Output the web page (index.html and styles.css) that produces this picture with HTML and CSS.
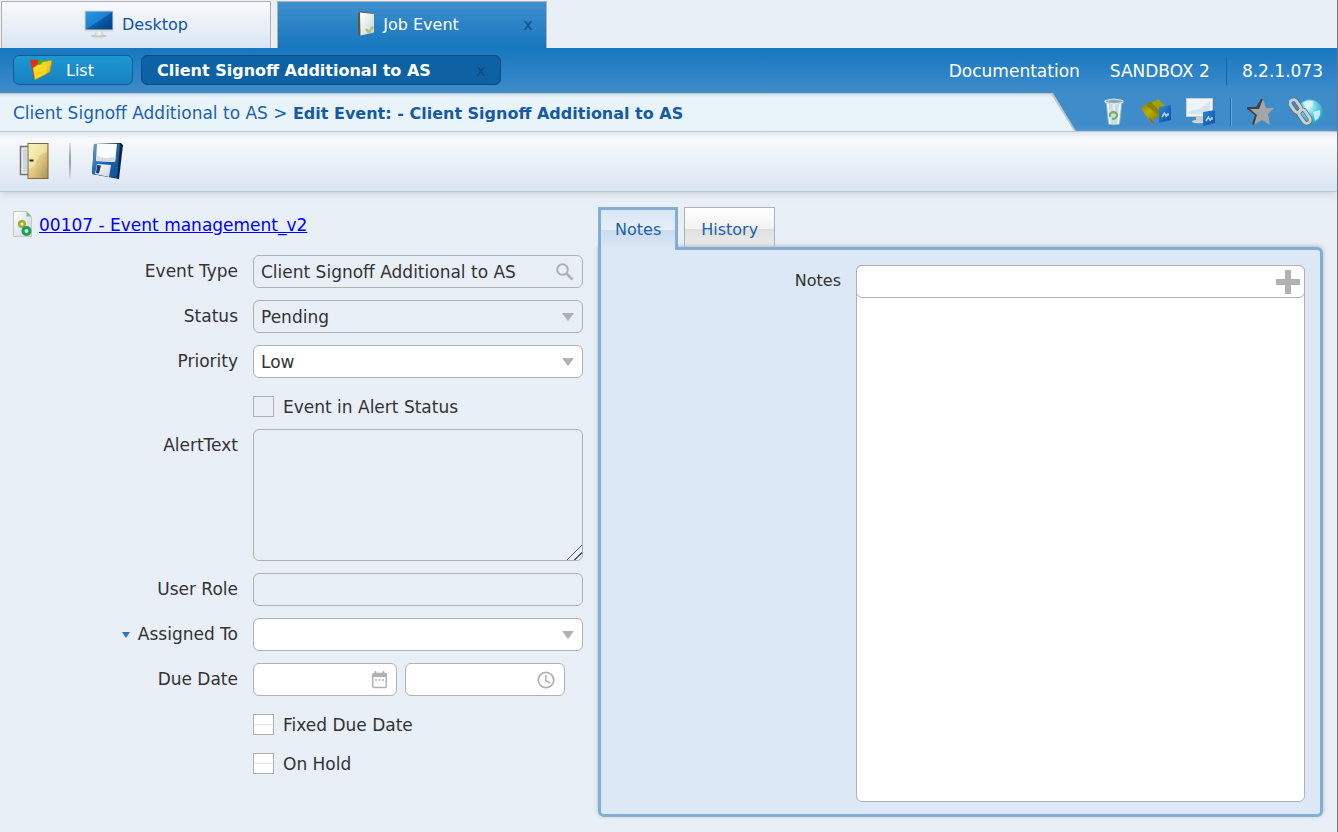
FILE: index.html
```
<!DOCTYPE html>
<html lang="en">
<head>
<meta charset="utf-8">
<title>Edit Event</title>
<link rel="stylesheet" href="styles.css">
</head>
<body>
<svg class="defs" aria-hidden="true">
  <defs>
    <linearGradient id="screen" x1="0" y1="0" x2="1" y2="1"><stop offset="0" stop-color="#2f9be6"/><stop offset=".5" stop-color="#1a7fd0"/><stop offset=".52" stop-color="#0a5cab"/><stop offset="1" stop-color="#043a80"/></linearGradient>
    <linearGradient id="metal" x1="0" y1="0" x2="1" y2="0"><stop offset="0" stop-color="#c4c6c9"/><stop offset=".5" stop-color="#f6f6f6"/><stop offset="1" stop-color="#b9bbbe"/></linearGradient>
    <linearGradient id="gold" x1="0" y1="0" x2="1" y2="1"><stop offset="0" stop-color="#f9f0b4"/><stop offset=".5" stop-color="#e3cc88"/><stop offset="1" stop-color="#b08f50"/></linearGradient>
    <linearGradient id="paper" x1="0" y1="0" x2="1" y2="1"><stop offset="0" stop-color="#ffffff"/><stop offset="1" stop-color="#cfd4d6"/></linearGradient>
    <linearGradient id="disk" x1="0" y1="0" x2="1" y2="1"><stop offset="0" stop-color="#6f9fcb"/><stop offset=".5" stop-color="#1b65ad"/><stop offset="1" stop-color="#0a4f9a"/></linearGradient>
    <linearGradient id="badge" x1="0" y1="0" x2="1" y2="1"><stop offset="0" stop-color="#2f86d8"/><stop offset="1" stop-color="#0a4fa6"/></linearGradient>
    <linearGradient id="folder" x1="0" y1="0" x2="1" y2="1"><stop offset="0" stop-color="#ffe95a"/><stop offset="1" stop-color="#dfa800"/></linearGradient>
    <linearGradient id="olive" x1="0" y1="0" x2="1" y2="1"><stop offset="0" stop-color="#7a7400"/><stop offset=".45" stop-color="#b9ad04"/><stop offset="1" stop-color="#6e6700"/></linearGradient>
    <radialGradient id="globe" cx=".45" cy=".3" r=".75"><stop offset="0" stop-color="#d9fbff"/><stop offset=".45" stop-color="#5fd0e4"/><stop offset="1" stop-color="#1799b8"/></radialGradient>
  </defs>
</svg>

<nav class="tabs">
  <button class="tab">
    <svg width="30" height="28" viewBox="0 0 30 28" aria-hidden="true">
      <ellipse cx="15" cy="26" rx="8" ry="1.500" fill="#a5abb2" opacity=".6"/>
      <path d="M11 20h8v4l2 1.500h-12l2-1.500z" fill="url(#metal)"/>
      <rect x=".5" y=".5" width="29" height="21" fill="#d7d9db"/>
      <rect x="1.500" y="1.500" width="27" height="18" fill="url(#screen)"/>
    </svg>
    Desktop
  </button>
  <div class="tab tab-active">
    <button class="tab-label">
      <svg width="18" height="26" viewBox="0 0 18 26" aria-hidden="true">
        <path d="M1 2l3-1.500 13 2v19l-13 1.500-3 2z" fill="#5d5a43"/>
        <path d="M3 1.500l14 1.500v18.500l-13.500 3z" fill="url(#paper)"/>
        <path d="M9 18l3 3.500 4-6" fill="none" stroke="#a9c67e" stroke-width="2.500"/>
      </svg>
      Job Event
    </button>
    <button class="tab-close" aria-label="Close Job Event">x</button>
  </div>
</nav>

<header class="header">
  <button class="subtab">
    <svg width="24" height="22" viewBox="0 0 24 22" aria-hidden="true">
      <path d="M1 1l8-.5 1 6-5 13z" fill="#e0301c"/>
      <path d="M9 3l2-2.500 6 1v7h-8z" fill="#28bd20"/>
      <path d="M4 9l4-3 4-1 1-2 10-2-2 12-15 8z" fill="url(#folder)" stroke="#a88900" stroke-width=".7"/>
      <path d="M4 9l15-4-2 10-11 5z" fill="#fbdc1c" opacity=".7"/>
    </svg>
    <span>List</span>
  </button>
  <div class="subtab subtab-active">
    <button class="subtab-label">Client Signoff Additional to AS</button>
    <button class="subtab-close" aria-label="Close event">x</button>
  </div>
  <div class="meta">
    <a href="#" class="meta-link">Documentation</a>
    <span class="meta-env">SANDBOX 2</span>
    <span class="meta-version">8.2.1.073</span>
  </div>
</header>

<div class="crumb-bar">
  <div class="crumb-edge">
    <div class="crumbs">Client Signoff Additional to AS &gt; <strong>Edit Event: - Client Signoff Additional to AS</strong></div>
  </div>
  <div class="quick">
    <button aria-label="Recycle bin">
      <svg width="20" height="28" viewBox="0 0 20 28" aria-hidden="true">
        <path d="M2 4h16l-2.500 22q-5.500 2-11 0z" fill="#c9dde2" stroke="#9db2b8" stroke-width=".8"/>
        <path d="M4 6l2 20M16 6l-2 20M10 6v6" stroke="#fff" stroke-width="1.500" opacity=".8"/>
        <path d="M1 2.500q9-3 18 0v2q-9 2.500-18 0z" fill="#8fa9b4" stroke="#e4ebec" stroke-width="1"/>
        <path d="M6 19q-1-4 3-5 4 0 4 4-1 3-5 3" fill="none" stroke="#79ae62" stroke-width="2"/>
      </svg>
    </button>
    <button aria-label="Map">
      <svg width="32" height="28" viewBox="0 0 32 28" aria-hidden="true">
        <path d="M1 9q4 1 6-3 2-2 4-2 4 1 8-3l7 7-5 12q-3-2-6 1l-3 4z" fill="url(#olive)"/>
        <path d="M7 7q3-4 5-3l9 9-1 5z" fill="#8a8300"/>
        <path d="M13 4q4 0 6-3l7 7-5 5z" fill="#a89e02"/>
        <path d="M10 20l5 6" stroke="#8b6a4c" stroke-width="1.500"/>
        <path d="M20 9l12-2v15l-12 3z" fill="url(#badge)"/>
        <path d="M23 19l2.500-4 2 4M27 17h2v-2" fill="none" stroke="#b5d6f5" stroke-width="1.500"/>
      </svg>
    </button>
    <button aria-label="Screen">
      <svg width="29" height="28" viewBox="0 0 29 28" aria-hidden="true">
        <ellipse cx="13" cy="23.500" rx="7" ry="1.800" fill="#d2d5d7"/>
        <path d="M10 18h7v5h-7z" fill="#c7cdd0"/>
        <rect x=".5" y=".5" width="26" height="18" fill="#f1f2f3" stroke="#c8ced2"/>
        <path d="M3 3h21v13h-21z" fill="#d5e4f0"/>
        <path d="M3 3h21q-8 9-21 10z" fill="#eef5fa"/>
        <path d="M17 14l12-2v13l-12 3z" fill="url(#badge)"/>
        <path d="M20 23l2.500-4 2 4M24 21h2v-2" fill="none" stroke="#b5d6f5" stroke-width="1.500"/>
      </svg>
    </button>
    <span class="quick-sep"></span>
    <button aria-label="Favourites">
      <svg width="27" height="28" viewBox="0 0 27 28" aria-hidden="true">
        <path d="M14 1h2l2 9-2 6-9 11-2-1 3-9-8-6v-2h9z" fill="#3d4044"/>
        <path d="M16 1l3 9h8l-6 6 2 11-8-5-8 5 3-10-7-6h9z" fill="#a3a5a7"/>
      </svg>
    </button>
    <button aria-label="Web links">
      <svg width="34" height="28" viewBox="0 0 34 28" aria-hidden="true">
        <circle cx="21" cy="14" r="12.500" fill="url(#globe)"/>
        <path d="M14 5q5-4 11-1l-2 4-6 2zM24 14l7-2q1 8-5 11z" fill="#e8fcff" opacity=".75"/>
        <g fill="none" stroke="#596d78" stroke-width="4.500"><rect x="3" y="1" width="7" height="14" rx="3.500" transform="rotate(-35 6.500 8)"/><rect x="12" y="11" width="7" height="15" rx="3.500" transform="rotate(-35 15.500 18.500)"/></g>
        <g fill="none" stroke="#ccd0d2" stroke-width="3"><rect x="3" y="1" width="7" height="14" rx="3.500" transform="rotate(-35 6.500 8)"/><rect x="12" y="11" width="7" height="15" rx="3.500" transform="rotate(-35 15.500 18.500)"/></g>
      </svg>
    </button>
  </div>
</div>

<div class="toolbar">
  <button aria-label="Exit">
    <svg width="30" height="36" viewBox="0 0 30 36" aria-hidden="true">
      <path d="M9 3.500h-7.500v28h7.500" fill="#e9eef0" stroke="#77716b" stroke-width="1.500"/>
      <path d="M4 6h4v23h-4z" fill="#c9d8e0"/>
      <rect x="9" y=".5" width="20" height="35" fill="url(#gold)" stroke="#80683f"/>
      <path d="M10 1h18v8q-9 2-11 10-2 5-7 7z" fill="#fff8c4" opacity=".45"/>
      <path d="M10.500 17.500h4" stroke="#2b2416" stroke-width="2"/>
    </svg>
  </button>
  <span class="toolbar-sep"></span>
  <button aria-label="Save">
    <svg width="32" height="36" viewBox="0 0 32 36" aria-hidden="true">
      <path d="M3 1l27-1 2 2-4 34-27-5z" fill="#14243a"/>
      <path d="M3 1h26l-3 34-25-4z" fill="url(#disk)"/>
      <path d="M6 1h20l-2 18-19-1z" fill="#fbfcfd"/>
      <path d="M6 13q10 4 19 0l-1 6-19-1z" fill="#d8dde2"/>
      <path d="M6 21l14 1-2 12-14-3z" fill="url(#paper)"/>
      <path d="M6 22l4 .5-2 8-3-.5z" fill="#123f75"/>
    </svg>
  </button>
</div>

<main class="main">
  <form class="form">
    <div class="record">
      <svg width="20" height="28" viewBox="0 0 20 28" aria-hidden="true">
        <path d="M.5 1.500h13l5 5v20h-18z" fill="url(#paper)" stroke="#c5c9cb"/>
        <path d="M13.500 1.500l5 5h-5z" fill="#73bc8d"/>
        <circle cx="9" cy="14" r="2.800" fill="none" stroke="#a2ad28" stroke-width="2.500"/>
        <circle cx="13.500" cy="21" r="3.500" fill="#c9eed9" stroke="#1d9b58" stroke-width="3"/>
      </svg>
      <a href="#">00107 - Event management_v2</a>
    </div>

    <div class="row">
      <label class="label" for="type">Event Type</label>
      <div class="control control-off">
        <input id="type" value="Client Signoff Additional to AS" readonly>
        <button type="button" class="icon-button" aria-label="Search">
          <svg width="18" height="18" viewBox="0 0 18 18" aria-hidden="true"><circle cx="6.500" cy="6.500" r="5.300" fill="none" stroke="#b1b1b1" stroke-width="2"/><path d="M10.500 10.500l6 6" stroke="#b1b1b1" stroke-width="2.500"/></svg>
        </button>
      </div>
    </div>
    <div class="row">
      <label class="label" for="status">Status</label>
      <div class="control control-off drop"><select id="status" disabled><option>Pending</option></select></div>
    </div>
    <div class="row">
      <label class="label" for="priority">Priority</label>
      <div class="control drop"><select id="priority"><option>Low</option></select></div>
    </div>
    <div class="row row-check">
      <label class="check"><input type="checkbox" disabled> Event in Alert Status</label>
    </div>
    <div class="row">
      <label class="label" for="alert">AlertText</label>
      <textarea id="alert" class="control control-off alert-text" readonly></textarea>
    </div>
    <div class="row">
      <label class="label" for="role">User Role</label>
      <div class="control control-off"><input id="role" readonly></div>
    </div>
    <div class="row">
      <label class="label label-menu" for="assigned">Assigned To</label>
      <div class="control drop"><select id="assigned"><option></option></select></div>
    </div>
    <div class="row">
      <label class="label" for="due">Due Date</label>
      <div class="due">
        <div class="control due-date">
          <input id="due">
          <button type="button" class="icon-button" aria-label="Pick date">
            <svg width="15" height="18" viewBox="0 0 15 18" aria-hidden="true"><path d="M3.500 0v4M11.500 0v4" stroke="#b1b1b1" stroke-width="1.500"/><rect x=".8" y="2.500" width="13.500" height="14" rx="1" fill="none" stroke="#b1b1b1" stroke-width="1.500"/><path d="M1 2h13v4h-13z" fill="#b1b1b1"/><path d="M3 9h2M6.500 9h2M10 9h2" stroke="#b1b1b1" stroke-width="1.500"/></svg>
          </button>
        </div>
        <div class="control due-time">
          <input aria-label="Due time">
          <button type="button" class="icon-button" aria-label="Pick time">
            <svg width="18" height="18" viewBox="0 0 18 18" aria-hidden="true"><circle cx="9" cy="9" r="7.700" fill="none" stroke="#b1b1b1" stroke-width="1.700"/><path d="M8.800 4v5.500l4 2.500" fill="none" stroke="#b1b1b1" stroke-width="1.500"/></svg>
          </button>
        </div>
      </div>
    </div>
    <div class="row row-check">
      <label class="check"><input type="checkbox"> Fixed Due Date</label>
    </div>
    <div class="row row-check">
      <label class="check"><input type="checkbox"> On Hold</label>
    </div>
  </form>

  <section class="side">
    <div class="side-tabs">
      <button class="side-tab side-tab-active">Notes</button>
      <button class="side-tab">History</button>
    </div>
    <div class="panel">
      <label class="label" for="note">Notes</label>
      <div class="notes">
        <div class="control notes-add">
          <input id="note">
          <button type="button" class="icon-button" aria-label="Add note">
            <svg width="24" height="24" viewBox="0 0 24 24" aria-hidden="true"><path d="M9 0h6v9h9v6h-9v9h-6v-9h-9v-6h9z" fill="#b1b1b1"/></svg>
          </button>
        </div>
      </div>
    </div>
  </section>
</main>
</body>
</html>
```

FILE: styles.css
```
* { box-sizing: border-box; }

body {
  margin: 0;
  min-height: 100vh;
  display: flex;
  flex-direction: column;
  background: #e8eff6;
  border-right: 1px solid #777;
  font: 16px/20px Verdana, "DejaVu Sans", sans-serif;
  color: #333;
}

button, input, select, textarea { font: inherit; color: inherit; }
button { border: 0; padding: 0; background: none; cursor: pointer; }
svg { display: block; flex: none; }
.defs { position: absolute; width: 0; height: 0; }

/* Top tabs */
.tabs { display: flex; gap: 6px; padding: 1px 1px 0; }
.tab {
  width: 270px;
  height: 47px;
  display: flex;
  align-items: center;
  justify-content: center;
  gap: 8px;
  border: 1px solid #b2b2b2;
  border-bottom: 0;
  background: linear-gradient(#f8f9fc, #dbe6f3);
  color: #0e55a0;
}
.tab svg { margin-bottom: 2px; }
.tab-active {
  background: linear-gradient(#3f8fcc, #1777bf);
  color: #fff;
}
.tab-label { flex: 1; display: flex; align-items: center; justify-content: center; gap: 8px; padding-left: 36px; }
.tab-close { width: 36px; color: #0f5087; }

/* Blue header */
.header {
  display: flex;
  gap: 8px;
  height: 45px;
  padding: 7px 14px 8px 13px;
  background: linear-gradient(#1777bf, #3f8ccb);
  color: #fff;
}
.subtab {
  width: 120px;
  display: flex;
  align-items: center;
  gap: 13px;
  padding-left: 15px;
  padding-top: 2px;
  border: 1px solid #125d96;
  border-radius: 6px;
  background: linear-gradient(#1c98d2, #1880c0);
}
.subtab svg { margin-bottom: 2px; }
.subtab-active { width: 360px; background: #0e62a4; border: 1px solid #0a4a88; }
.subtab-label { flex: 1; text-align: left; font-weight: bold; white-space: nowrap; }
.subtab-close { width: 38px; color: #0a4a7e; }
.meta {
  margin-left: auto;
  display: flex;
  align-items: center;
  gap: 30px;
  padding-top: 2px;
  font-size: 17px;
  white-space: nowrap;
}
.meta-link { color: inherit; text-decoration: none; }
.meta-version { margin-left: -14px; padding-left: 15px; border-left: 1px solid #1468a6; line-height: 28px; }

/* Breadcrumb strip with a slanted end */
.crumb-bar { display: flex; height: 39px; background: #3f8ccb; border-bottom: 1px solid #b7c3cd; }
.crumb-edge {
  flex: 1;
  padding: 1px 2px 0 0;
  background: #b9c6cf;
  clip-path: polygon(0 0, calc(100% - 23px) 0, 100% 100%, 0 100%);
}
.crumbs {
  height: 100%;
  padding-left: 13px;
  line-height: 39px;
  font-size: 17px;
  background: linear-gradient(#d6e0e6, #e8f3fa 4px);
  color: #1b62a7;
  white-space: nowrap;
  clip-path: polygon(0 0, calc(100% - 23px) 0, 100% 100%, 0 100%);
}
.crumbs strong { font-size: 16px; color: #165a9f; }
.quick { display: flex; align-items: center; gap: 15px; padding: 0 14px 0 28px; }
.quick-sep { width: 2px; height: 28px; border-left: 1px solid #176caa; border-right: 1px solid #62a8da; }

/* Toolbar */
.toolbar {
  display: flex;
  align-items: center;
  gap: 20px;
  height: 60px;
  padding: 0 19px 2px;
  background: linear-gradient(#e3e8ed, #f7f9fc 7px, #d9e5f3);
  border-bottom: 1px solid #b7c3cd;
  box-shadow: 0 2px 7px #cbd3d9;
}
.toolbar-sep { width: 2px; height: 36px; background: linear-gradient(#dfe3e8, #9ea4aa 40%, #9ea4aa 60%, #dfe3e8); }

/* Content */
.main {
  flex: 1;
  display: grid;
  grid-template-columns: 114fr 145fr;
  gap: 15px;
  padding: 15px 14px 15px 13px;
}
.form { font-size: 17px; }
.record { display: flex; align-items: center; gap: 6px; height: 36px; margin-bottom: 12px; }
.record svg { margin-bottom: 2px; }
.record a { color: #00f; }

.row { display: grid; grid-template-columns: 225px 1fr; gap: 15px; margin-bottom: 12px; }
.label { text-align: right; line-height: 32px; }
.label-menu::before {
  content: "";
  display: inline-block;
  margin-right: 8px;
  vertical-align: 2px;
  border: 4px solid transparent;
  border-top: 6px solid #2d77b5;
  border-bottom: 0;
}
.control {
  display: flex;
  align-items: center;
  min-width: 0;
  height: 33px;
  border: 1px solid #b1b1b1;
  border-radius: 6px;
  background: #fff;
}
.control-off { background: #e8eff6; }
.control input, .control select {
  flex: 1;
  min-width: 0;
  height: 31px;
  padding: 1px 7px 0;
  border: 0;
  outline: 0;
  background: none;
  appearance: none;
  opacity: 1;
}
.icon-button { margin-right: 8px; }
.due .icon-button { margin-right: 9px; }
.drop::after {
  content: "";
  margin-right: 8px;
  border: 6px solid transparent;
  border-top: 8px solid #b1b1b1;
  border-bottom: 0;
}
.alert-text { width: 100%; height: 132px; margin: 0; padding: 7px; }
.alert-text::-webkit-resizer {
  background: linear-gradient(135deg, transparent 48%, #555 48%, #555 53%, transparent 53%, transparent 73%, #555 73%, #555 78%, transparent 78%);
}
.row-check { margin-bottom: 6px; }
.check { grid-column: 2; display: flex; align-items: center; gap: 9px; height: 33px; }
.check input {
  appearance: none;
  width: 21px;
  height: 21px;
  margin: 0;
  border: 1px solid #b1b1b1;
  background: linear-gradient(#fff 9px, #e6e6e6 9px, #e6e6e6 10px, #fff 10px);
}
.check input:disabled { background: #e8eff6; }
.due { display: flex; gap: 8px; }
.due-date { width: 144px; }
.due-time { width: 160px; }

/* Notes panel */
.side { display: flex; flex-direction: column; min-width: 0; }
.side-tabs { display: flex; align-items: flex-start; gap: 6px; height: 40px; }
.side-tab {
  height: 40px;
  padding: 5px 16px 0;
  border: 1px solid #b1b1b1;
  border-bottom: 0;
  background: linear-gradient(#fff, #f1f1f1 55%, #e0e0e0 55%, #ececec);
  color: #1b62a7;
}
.side-tab-active {
  position: relative;
  height: 43px;
  padding: 0 14px;
  border: 3px solid #84add2;
  border-bottom: 0;
  background: linear-gradient(#dbe7f5, #e5eef8 50%, #cbdcf0 50%, #dce8f5);
}
.panel {
  flex: 1;
  display: grid;
  grid-template-columns: 225px 1fr;
  gap: 15px;
  padding: 15px 15px 12px;
  border: 3px solid #84add2;
  border-radius: 0 6px 6px 6px;
  background: #dce8f5;
  box-shadow: 0 -1px 4px #b3bcc5;
}
.notes { border: 1px solid #b1b1b1; border-radius: 6px; background: #fff; }
.notes-add { margin: -1px; }
.notes-add .icon-button { margin-right: 4px; }
```
